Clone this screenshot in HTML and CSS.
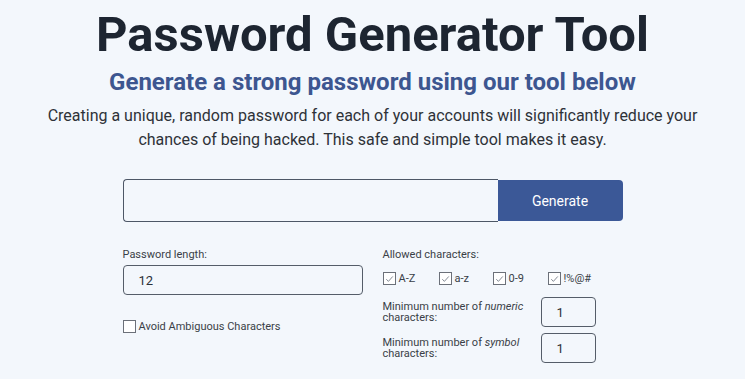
FILE: index.html
```html
<!DOCTYPE html>
<html>
<head>
<meta charset="utf-8">
<link rel="stylesheet" href="styles.css">
</head>
<body>
<main class="page">
  <h1 class="title">Password Generator Tool</h1>
  <h2 class="subtitle">Generate a strong password using our tool below</h2>
  <p class="intro">Creating a unique, random password for each of your accounts will significantly reduce your chances of being hacked. This safe and simple tool makes it easy.</p>

  <div class="tool">
    <div class="gen-row">
      <div class="output"></div>
      <button class="gen-btn">Generate</button>
    </div>

    <div class="options">
      <div class="col-left">
        <div class="label">Password length:</div>
        <div class="field wide">12</div>
        <label class="avoid"><span class="box"></span>Avoid Ambiguous Characters</label>
      </div>
      <div class="col-right">
        <div class="label">Allowed characters:</div>
        <div class="chars">
          <span class="chk"><span class="box checked"><svg viewBox="0 0 12 12"><path d="M2.5 6.2 L4.8 8.6 L9.6 3.2" fill="none" stroke="#6b7280" stroke-width="0.9"/></svg></span>A-Z</span>
          <span class="chk"><span class="box checked"><svg viewBox="0 0 12 12"><path d="M2.5 6.2 L4.8 8.6 L9.6 3.2" fill="none" stroke="#6b7280" stroke-width="0.9"/></svg></span>a-z</span>
          <span class="chk"><span class="box checked"><svg viewBox="0 0 12 12"><path d="M2.5 6.2 L4.8 8.6 L9.6 3.2" fill="none" stroke="#6b7280" stroke-width="0.9"/></svg></span>0-9</span>
          <span class="chk"><span class="box checked"><svg viewBox="0 0 12 12"><path d="M2.5 6.2 L4.8 8.6 L9.6 3.2" fill="none" stroke="#6b7280" stroke-width="0.9"/></svg></span>!%@#</span>
        </div>
        <div class="min-row first">
          <div class="min-label">Minimum number of <em>numeric</em><br>characters:</div>
          <div class="field small">1</div>
        </div>
        <div class="min-row">
          <div class="min-label">Minimum number of <em>symbol</em><br>characters:</div>
          <div class="field small">1</div>
        </div>
      </div>
    </div>
  </div>
</main>
</body>
</html>
```

FILE: styles.css
```css
html, body {
  margin: 0;
  padding: 0;
  background: #f3f7fc;
}
body {
  font-family: Roboto, "Liberation Sans", sans-serif;
  color: #333a44;
}
.page {
  display: flex;
  flex-direction: column;
  align-items: center;
  padding-top: 7px;
}
.title {
  margin: 0;
  font-size: 49px;
  line-height: 56px;
  font-weight: 700;
  color: #1d2531;
}
.subtitle {
  margin: 4px 0 0 0;
  font-size: 24px;
  line-height: 30px;
  font-weight: 700;
  color: #3d5690;
}
.intro {
  margin: 7px 0 0 0;
  width: 680px;
  text-align: center;
  font-size: 16px;
  line-height: 24px;
  color: #2e3238;
}
.tool {
  width: 500px;
  margin-top: 27px;
}
.gen-row {
  display: flex;
  height: 43px;
}
.output {
  flex: 1;
  border: 1px solid #4d5766;
  border-right: none;
  border-radius: 4px 0 0 4px;
}
.gen-btn {
  width: 125px;
  margin: 1px 0;
  border: none;
  border-radius: 0 4px 4px 0;
  background: #3b5897;
  color: #fff;
  font-family: Roboto, "Liberation Sans", sans-serif;
  font-size: 14px;
  padding: 0;
}
.options {
  display: grid;
  grid-template-columns: 240px 240px;
  column-gap: 20px;
  margin-top: 26px;
  font-size: 11px;
  color: #3a3f47;
}
.label {
  line-height: 14px;
  height: 14px;
}
.field {
  box-sizing: border-box;
  border: 1px solid #555d69;
  border-radius: 4px;
  font-size: 13px;
  color: #2c3038;
  display: flex;
  align-items: center;
}
.wide {
  margin-top: 3px;
  height: 30px;
  padding-left: 15px;
}
.avoid {
  display: flex;
  align-items: center;
  margin-top: 25px;
  font-size: 11px;
}
.box {
  box-sizing: border-box;
  width: 13px;
  height: 13px;
  border: 1px solid #6b7079;
  background: #fff;
  margin-right: 3px;
  display: inline-flex;
}
.box svg {
  width: 12px;
  height: 12px;
}
.chars {
  display: flex;
  margin-top: 9px;
  height: 14px;
  align-items: center;
}
.chk {
  display: inline-flex;
  align-items: center;
  width: 56px;
}
.chk:nth-child(2) { width: 54px; }
.chk:nth-child(3) { width: 55px; }
.min-row {
  display: flex;
  align-items: center;
  height: 30px;
  margin-top: 6px;
}
.min-row.first { margin-top: 12px; }
.min-label {
  width: 158px;
  line-height: 11px;
}
.small {
  width: 55px;
  height: 30px;
  padding-left: 15px;
}
```
